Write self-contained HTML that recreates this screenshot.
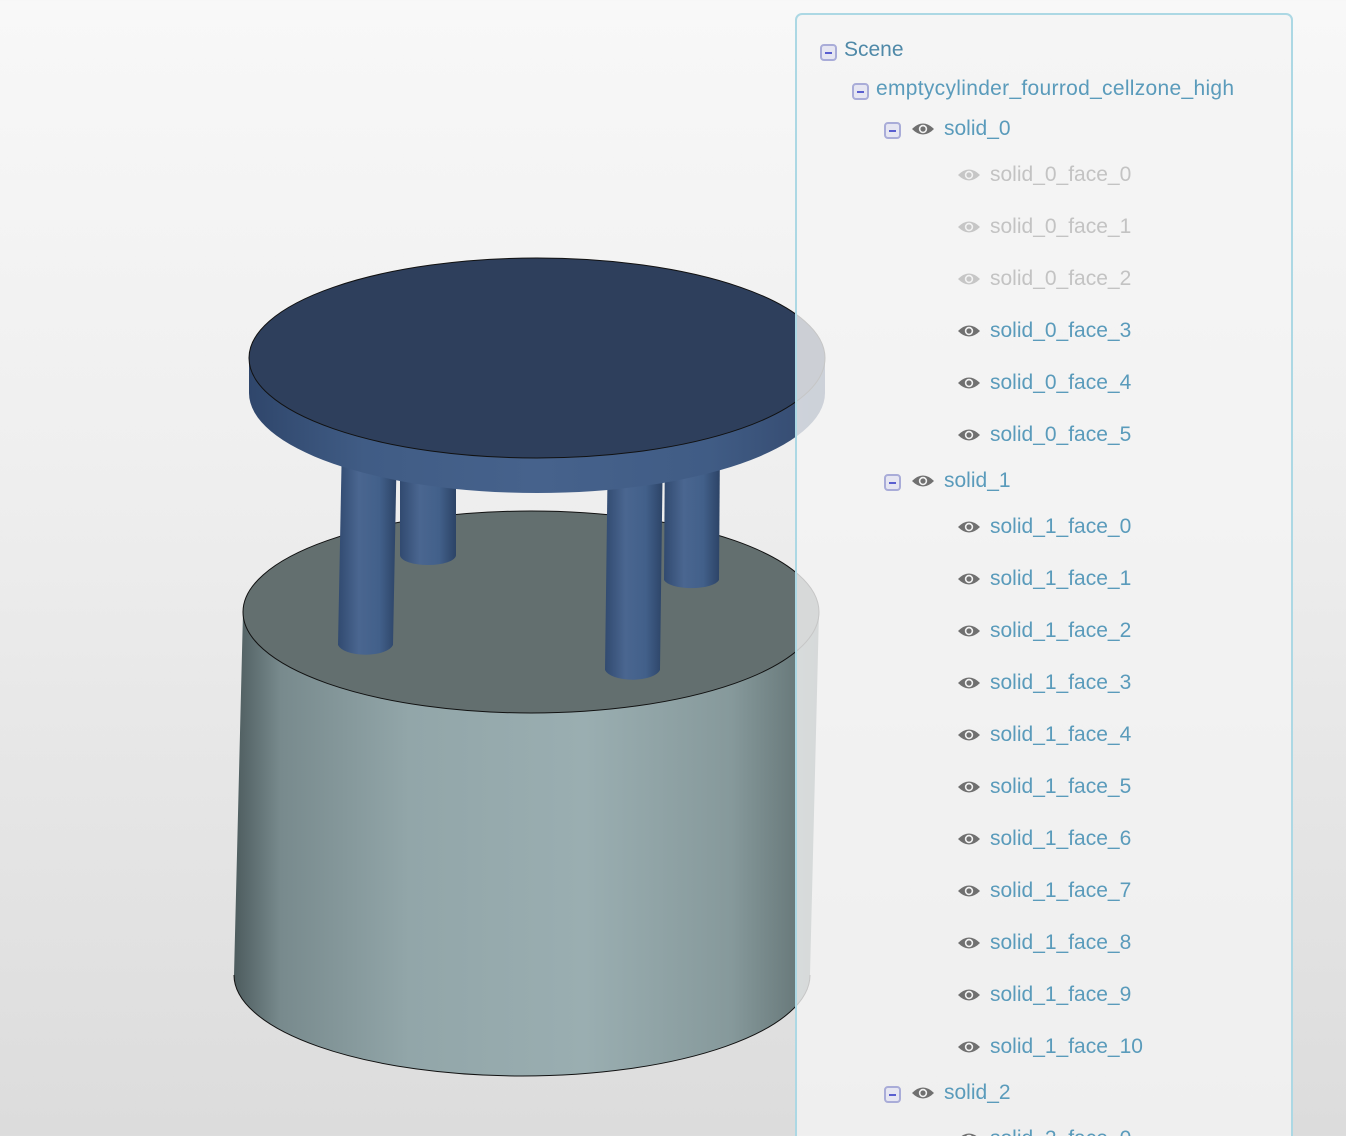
<!DOCTYPE html>
<html><head><meta charset="utf-8"><style>
html,body{margin:0;padding:0;width:1346px;height:1136px;overflow:hidden}
body{background:linear-gradient(#f8f8f8 0%,#efefef 40%,#dcdcdc 100%);font-family:"Liberation Sans",sans-serif;position:relative}
#scene{position:absolute;left:0;top:0}
#panel{position:absolute;left:795px;top:13px;width:494px;height:1140px;border:2px solid #acd8e4;border-radius:7px;background:rgba(244,244,244,0.8)}
.row{position:absolute;font-size:21px;line-height:24px;color:#5a9bbb;white-space:nowrap}
.row.f{color:#c3c3c3}
.mb{position:absolute;width:17px;height:17px;border:2px solid #a9acd8;border-radius:4px;background:#e6e6f2;box-sizing:border-box}
.mb:after{content:"";position:absolute;left:3px;top:5.5px;width:7px;height:2px;background:#5a5fd0}
.eye{position:absolute}
</style></head><body>
<svg id="scene" width="1346" height="1136">
<defs>
<linearGradient id="cyl" x1="0" x2="1">
<stop offset="0" stop-color="#4d5c5e"/><stop offset="0.08" stop-color="#788a8d"/><stop offset="0.3" stop-color="#92a6a9"/><stop offset="0.6" stop-color="#9aaeb1"/><stop offset="0.85" stop-color="#86999b"/><stop offset="1" stop-color="#5f6f70"/>
</linearGradient>
<linearGradient id="rod" x1="0" x2="1">
<stop offset="0" stop-color="#314a70"/><stop offset="0.35" stop-color="#4a6690"/><stop offset="0.7" stop-color="#42608a"/><stop offset="1" stop-color="#2c4366"/>
</linearGradient>
<linearGradient id="disk" x1="0" x2="1">
<stop offset="0" stop-color="#2f466b"/><stop offset="0.2" stop-color="#405c85"/><stop offset="0.5" stop-color="#46628c"/><stop offset="0.8" stop-color="#405c85"/><stop offset="1" stop-color="#34496e"/>
</linearGradient>
</defs>
<path d="M243,612 L234,975 A288,101 0 0 0 810,975 L819,612 Z" fill="url(#cyl)"/>
<path d="M234,975 A288,101 0 0 0 810,975" fill="none" stroke="#111" stroke-width="1"/>
<ellipse cx="531" cy="612" rx="288" ry="101" fill="#636f6f" stroke="#111" stroke-width="1"/>
<path d="M342,440 L338,645 A28,12 0 0 0 393,645 L397,440 Z" fill="url(#rod)"/>
<path d="M400,440 L400,555 A28,10 0 0 0 456,555 L456,440 Z" fill="url(#rod)"/>
<path d="M608,440 L605,670 A28,12 0 0 0 660,670 L663,440 Z" fill="url(#rod)"/>
<path d="M665,440 L664,580 A28,10 0 0 0 719,580 L720,440 Z" fill="url(#rod)"/>
<path d="M249,358 L249,393 A288,100 0 0 0 825,393 L825,358 Z" fill="url(#disk)"/>
<ellipse cx="537" cy="358" rx="288" ry="100" fill="#2e3f5c" stroke="#111" stroke-width="1"/>
</svg>
<div id="panel"></div>
<div class="mb" style="left:820px;top:44px"></div><div class="row" style="left:844px;top:38px;color:#4f89a8">Scene</div>
<div class="mb" style="left:852px;top:83px"></div><div class="row" style="left:876px;top:77px;letter-spacing:0.3px">emptycylinder_fourrod_cellzone_high</div>
<div id="rows"></div>
<script>
var eye=function(x,y,c){return '<svg class="eye" style="left:'+x+'px;top:'+y+'px" width="24" height="16" viewBox="0 0 24 16"><path d="M1,8 Q12,-3 23,8 Q12,19 1,8 Z" fill="'+c+'"/><circle cx="12" cy="8" r="4.2" fill="#f2f2f2"/><circle cx="12" cy="8" r="2.6" fill="'+c+'"/></svg>';};
var h='';
function solid(n,y){h+='<div class="mb" style="left:884px;top:'+(y+4)+'px"></div>'+eye(911,y+3,'#707070')+'<div class="row" style="left:944px;top:'+(y-1)+'px">solid_'+n+'</div>';}
function face(t,y,f){h+=eye(957,y+3,f?'#c6c6c6':'#707070')+'<div class="row'+(f?' f':'')+'" style="left:990px;top:'+(y-1)+'px">'+t+'</div>';}
solid(0,118);
for(var i=0;i<6;i++)face('solid_0_face_'+i,164+52*i,i<3);
solid(1,470);
for(var i=0;i<11;i++)face('solid_1_face_'+i,516+52*i,false);
solid(2,1082);
face('solid_2_face_0',1128,false);
document.getElementById('rows').innerHTML=h;
</script>
</body></html>
